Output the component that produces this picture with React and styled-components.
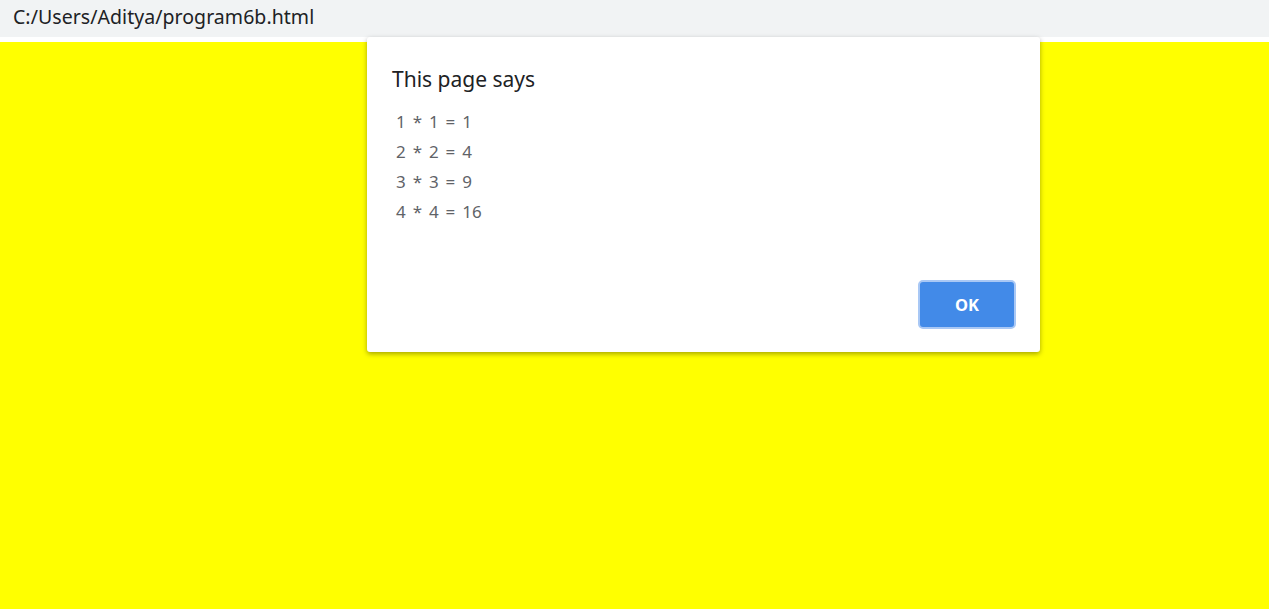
import React from "react";
import styled, { createGlobalStyle } from "styled-components";

const GlobalStyle = createGlobalStyle`
  html, body {
    margin: 0;
    padding: 0;
    height: 100%;
    overflow: hidden;
  }
  body {
    font-family: "Noto Sans", "Open Sans", sans-serif;
  }
`;

const Window = styled.div`
  position: relative;
  width: 1269px;
  height: 609px;
  display: flex;
  flex-direction: column;
  background: #ffff00;
`;

const AddressBar = styled.div`
  height: 37px;
  flex: none;
  display: flex;
  align-items: center;
  padding: 0 0 4px 13px;
  box-sizing: border-box;
  background: #f1f3f4;
  color: #202124;
  font-size: 19.5px;
  letter-spacing: 0.05px;
`;

const WhiteStrip = styled.div`
  height: 5px;
  flex: none;
  background: #ffffff;
`;

const Page = styled.div`
  flex: 1;
  background: #ffff00;
`;

const Dialog = styled.div`
  position: absolute;
  left: 367px;
  top: 37px;
  width: 673px;
  height: 315px;
  box-sizing: border-box;
  background: #ffffff;
  border-radius: 3px;
  box-shadow: 0 2px 5px rgba(0, 0, 0, 0.35);
  padding: 25px 24px 23px 25px;
  display: flex;
  flex-direction: column;
`;

const Title = styled.div`
  font-size: 21px;
  color: #202124;
  line-height: 34px;
`;

const Message = styled.div`
  margin-top: 11px;
  padding-left: 4px;
  font-size: 17px;
  word-spacing: 2.5px;
  line-height: 30px;
  color: #5f6368;
  flex: 1;
`;

const Footer = styled.div`
  display: flex;
  justify-content: flex-end;
`;

const OkButton = styled.button`
  width: 98px;
  height: 49px;
  border-radius: 5px;
  border: 2px solid #a9c8f5;
  background: #428ae8;
  color: #ffffff;
  font-family: "Noto Sans", "Open Sans", sans-serif;
  font-weight: 700;
  font-size: 16.5px;
  cursor: pointer;
`;

const lines = ["1 * 1 = 1", "2 * 2 = 4", "3 * 3 = 9", "4 * 4 = 16"];

export default function App() {
  return (
    <Window>
      <GlobalStyle />
      <AddressBar>C:/Users/Aditya/program6b.html</AddressBar>
      <WhiteStrip />
      <Page />
      <Dialog>
        <Title>This page says</Title>
        <Message>
          {lines.map((l) => (
            <div key={l}>{l}</div>
          ))}
        </Message>
        <Footer>
          <OkButton>OK</OkButton>
        </Footer>
      </Dialog>
    </Window>
  );
}
